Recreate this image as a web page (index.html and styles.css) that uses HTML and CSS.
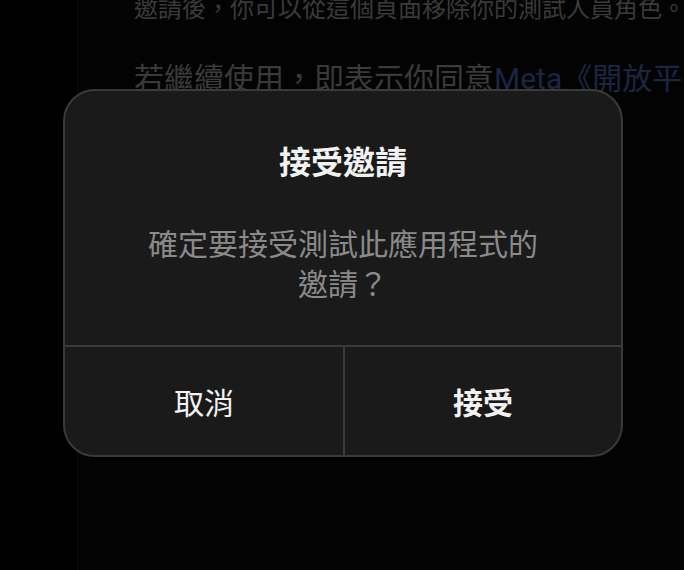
FILE: index.html
```html
<!DOCTYPE html>
<html lang="zh-Hant">
<head>
<meta charset="utf-8">
<title>接受邀請</title>
<link rel="stylesheet" href="styles.css">
</head>
<body>
<div class="page">
  <aside class="side"></aside>
  <main class="main">
    <div class="content">
      <p class="para para-small">邀請後，你可以從這個頁面移除你的測試人員角色。</p>
      <p class="para">若繼續使用，即表示你同意<span class="link">Meta《開放平台條款》</span>和<span class="link">《開發者政策》</span>。</p>
    </div>
  </main>
</div>
<div class="dialog" role="dialog">
  <div class="dialog-title">接受邀請</div>
  <div class="dialog-msg">確定要接受測試此應用程式的邀請？</div>
  <div class="dialog-actions">
    <div class="btn btn-cancel">取消</div>
    <div class="btn btn-accept">接受</div>
  </div>
</div>
</body>
</html>
```
FILE: styles.css
```css
html, body {
  margin: 0;
  padding: 0;
  width: 684px;
  height: 570px;
  overflow: hidden;
  background: #000;
  font-family: "Noto Sans CJK TC", sans-serif;
}

.page {
  display: flex;
  height: 570px;
}

.side {
  width: 77px;
  flex: none;
  background: #000;
  border-right: 1px solid #0b0b0b;
}

.main {
  flex: 1;
  min-width: 0;
  background: #030303;
  padding-left: 56px;
  overflow: hidden;
}

.content {
  margin-top: -9px;
}

.para {
  margin: 0;
  font-size: 30px;
  line-height: 40px;
  color: #3a3a3a;
  white-space: nowrap;
}

.para-small {
  font-size: 24px;
  line-height: 32px;
  margin-bottom: 33px;
}

.link {
  font-family: Roboto, "Noto Sans CJK TC", sans-serif;
  color: #1c2642;
}

.dialog {
  position: absolute;
  left: 63px;
  top: 89px;
  width: 560px;
  box-sizing: border-box;
  background: #1a1a1a;
  border: 2px solid #3a3a3a;
  border-radius: 32px;
  overflow: hidden;
  text-align: center;
}

.dialog-title {
  padding-top: 49px;
  font-size: 32px;
  line-height: 40px;
  font-weight: 700;
  color: #f2f2f2;
}

.dialog-msg {
  padding: 42px 80px 43px;
  font-size: 30px;
  line-height: 40px;
  color: #8a8a8a;
}

.dialog-actions {
  display: grid;
  grid-template-columns: 280px 1fr;
  border-top: 2px solid #3a3a3a;
  height: 108px;
}

.btn {
  display: flex;
  align-items: center;
  justify-content: center;
  font-size: 30px;
  color: #f2f2f2;
}

.btn-cancel {
  border-right: 2px solid #3a3a3a;
}

.btn-accept {
  font-weight: 700;
}
```
